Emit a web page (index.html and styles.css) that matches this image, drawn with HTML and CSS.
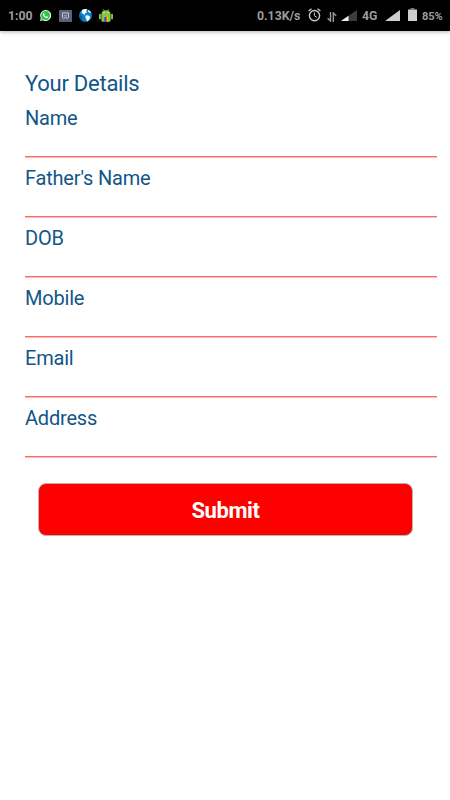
FILE: index.html
```html
<!DOCTYPE html>
<html lang="en">
<head>
  <meta charset="UTF-8" />
  <meta name="viewport" content="width=device-width, initial-scale=1.0"/>
  <title>Your Details</title>
  <link rel="stylesheet" href="styles.css">
</head>
<body>
  <!-- Status Bar -->
  <header class="status-bar">
    <div class="status-left">
      <span class="clock">1:00</span>
      <svg class="icon-chat" width="11" height="11" viewBox="0 0 12 12">
        <path d="M0 12 .9 8.8A6 6 0 1 1 3.2 11.2Z" fill="#f4f4f4"/>
        <path d="M1.2 10.9 1.9 8.6A4.9 4.9 0 1 1 3.5 10.2Z" fill="#25c943"/>
        <path d="M4.2 3.2 5.2 4.9 4.7 5.6Q5.3 6.8 6.6 7.4L7.4 6.7 9 7.6Q8.4 9 7 8.8 3.4 7.6 3.2 4.6 3.3 3.4 4.2 3.2Z" fill="#fff"/>
      </svg>
      <svg class="icon-cast" width="13" height="12" viewBox="0 0 13 12">
        <rect width="13" height="12" rx=".5" fill="#596176"/>
        <path d="M4.4 7.5H3.5V2.9H9.5V7.5H8.6" fill="none" stroke="#c4c8d2"/>
        <path d="M4.4 9.3 6.5 6.6 8.6 9.3" fill="none" stroke="#c4c8d2"/>
        <path d="M5.2 5.8Q6.5 4.2 7.8 5.8" fill="none" stroke="#c4c8d2" stroke-width=".8"/>
      </svg>
      <svg class="icon-globe" width="13" height="13" viewBox="0 0 13 13">
        <circle cx="6.5" cy="6.5" r="6.5" fill="#0d7fc8"/>
        <path d="M3.4.8Q6.2-.5 8.2.3L7.2 2 8 3.2 6.2 4.2 5.6 6 3.6 4.4 2.4 3.4Z" fill="#fff"/>
        <path d="M9.2.8 11.2 2.2 12.3 4.2 10.4 3.8 9 2.6Z" fill="#d9effa"/>
        <path d="M6.6 6.6 9 6.2 11.2 7.8 10.4 10.2 8.4 12.4 7.4 10.4 6.4 8.6Z" fill="#fff"/>
        <path d="M.4 5.2 2.4 6.8 3.4 9 3.2 11.4Q-.4 9 .4 5.2Z" fill="#075b9e"/>
      </svg>
      <svg class="icon-android" width="14" height="13" viewBox="0 0 14 13">
        <path d="M4.2.2 5.3 2M9.8.2 8.7 2" stroke="#8bc540" stroke-width=".8"/>
        <path d="M2.4 5.3Q2.7 1.3 7 1.3T11.6 5.3V11.3Q11.6 12.8 10.2 12.8H3.8Q2.4 12.8 2.4 11.3Z" fill="#8bc540"/>
        <rect y="4.8" width="1.9" height="5.5" rx=".9" fill="#8bc540"/>
        <rect x="12.1" y="4.8" width="1.9" height="5.5" rx=".9" fill="#8bc540"/>
        <circle cx="5" cy="3.5" r=".6" fill="#fff"/>
        <circle cx="9" cy="3.5" r=".6" fill="#fff"/>
        <path d="M5 8H6V13H5Z" fill="#168ac7"/>
        <path d="M6 8H7V13H6Z" fill="#4b48a4"/>
        <path d="M7 8H8V13H7Z" fill="#ee4c36"/>
        <path d="M8 8H9V13H8Z" fill="#f7c52e"/>
      </svg>
    </div>
    <div class="status-right">
      <span class="speed">0.13K/s</span>
      <svg class="icon-alarm" width="13" height="14" viewBox="0 0 13 14">
        <circle cx="6.5" cy="7.6" r="5.1" fill="none" stroke="#c8c8c8" stroke-width="1.4"/>
        <path d="M.6 3.1 3.5.8M12.4 3.1 9.5.8" stroke="#c8c8c8" stroke-width="1.3"/>
        <path d="M6.4 4.5V7.8L8.8 9.3" fill="none" stroke="#c8c8c8"/>
      </svg>
      <svg class="icon-data" width="10" height="10" viewBox="0 0 10 10">
        <path d="M3.5 0V9L.6 6.2" fill="none" stroke="#9a9a9a" stroke-width="1.4"/>
        <path d="M6.3 10V1L9.2 3.8" fill="none" stroke="#9a9a9a" stroke-width="1.4"/>
      </svg>
      <svg class="icon-signal-low" width="16" height="11" viewBox="0 0 16 11">
        <path d="M0 11 16 0V11Z" fill="#3c3c3c"/>
        <path d="M0 11 7.5 5.8V11Z" fill="#f0f0f0"/>
      </svg>
      <span class="network">4G</span>
      <svg class="icon-signal" width="15" height="11" viewBox="0 0 15 11">
        <path d="M0 11 15 0V11Z" fill="#cecece"/>
      </svg>
      <svg class="icon-battery" width="9" height="13" viewBox="0 0 9 13">
        <path d="M2.5 0H6.5V1.5H2.5Z" fill="#777"/>
        <path d="M0 1.5H9V13H0Z" fill="#cecece"/>
      </svg>
      <span class="percent">85%</span>
    </div>
  </header>

  <!-- Details Form -->
  <form class="details-form">
    <h1>Your Details</h1>
    <div class="field">
      <label for="name">Name</label>
      <input type="text" id="name" />
    </div>
    <div class="field">
      <label for="father">Father's Name</label>
      <input type="text" id="father" />
    </div>
    <div class="field">
      <label for="dob">DOB</label>
      <input type="text" id="dob" />
    </div>
    <div class="field">
      <label for="mobile">Mobile</label>
      <input type="text" id="mobile" />
    </div>
    <div class="field">
      <label for="email">Email</label>
      <input type="text" id="email" />
    </div>
    <div class="field">
      <label for="address">Address</label>
      <input type="text" id="address" />
    </div>
    <button class="submit-btn" type="button">Submit</button>
  </form>
</body>
</html>
```
FILE: styles.css
```css
* {
  box-sizing: border-box;
}

body {
  margin: 0;
  min-height: 800px;
  font-family: Roboto, sans-serif;
  background-color: #fff;
}

.status-bar {
  display: flex;
  justify-content: space-between;
  height: 31px;
  padding: 0 7px 0 8px;
  background-color: #000;
  color: #9c9c9c;
  font-size: 12.3px;
  font-weight: bold;
  line-height: 33px;
  box-shadow: 0 1px 4px rgba(0, 0, 0, 0.3);
}

.status-left,
.status-right {
  display: flex;
  align-items: flex-start;
}

.status-bar svg {
  display: block;
  flex: none;
}

.clock {
  width: 32px;
}

.icon-chat {
  margin-top: 10px;
}

.icon-cast {
  margin: 10px 0 0 8px;
}

.icon-globe {
  margin: 9px 0 0 7px;
}

.icon-android {
  margin: 9px 0 0 7px;
}

.speed {
  width: 51px;
}

.icon-alarm {
  margin-top: 8px;
}

.icon-data {
  margin: 12px 0 0 6px;
}

.icon-signal-low {
  margin: 10px 0 0 4px;
}

.network {
  width: 23px;
  margin-left: 5px;
}

.icon-signal {
  margin-top: 10px;
}

.icon-battery {
  margin: 8px 0 0 8px;
}

.percent {
  width: 21px;
  margin-left: 5px;
  font-size: 11px;
}

.details-form {
  padding: 39px 13px 0 25px;
  color: #125688;
}

h1 {
  margin: 0 0 -1px;
  font-size: 22px;
  font-weight: normal;
  line-height: 28px;
  letter-spacing: -0.25px;
}

.field {
  height: 60px;
  border-bottom: 1px solid #ff6969;
  box-shadow: 0 1px 0 #ffb9b9;
}

.field label {
  display: block;
  font-size: 20px;
  line-height: 43px;
  letter-spacing: -0.2px;
}

.field input {
  display: block;
  width: 100%;
  height: 16px;
  padding: 0;
  border: none;
  outline: none;
  background: none;
  font: inherit;
  color: inherit;
}

.submit-btn {
  display: block;
  width: 375px;
  height: 53px;
  margin: 26px 0 0 13px;
  padding: 2px 0 0;
  border: 1px solid #b5b5b5;
  border-radius: 8px;
  background-color: #f00;
  color: #fff;
  font-family: inherit;
  font-size: 22px;
  font-weight: bold;
  letter-spacing: -0.4px;
}
```
